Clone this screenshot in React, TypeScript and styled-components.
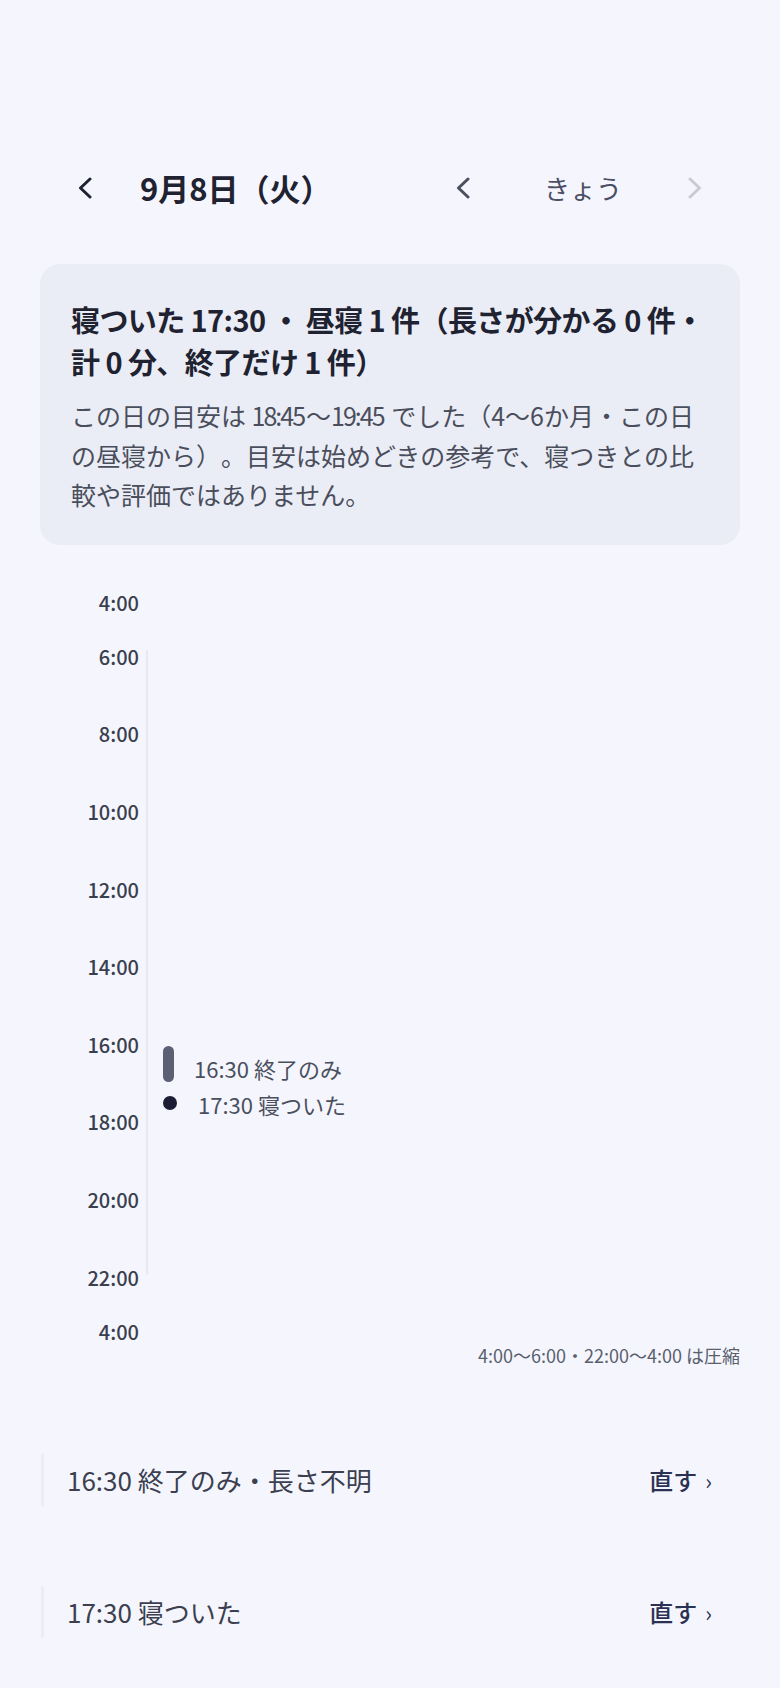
import React from 'react';
import styled, { createGlobalStyle } from 'styled-components';

const GlobalStyle = createGlobalStyle`
    html, body {
        margin: 0;
        padding: 0;
        background: #f5f6fd;
    }
    body {
        font-family: 'Noto Sans CJK JP', 'Noto Sans', sans-serif;
        color: #1f2230;
        text-spacing-trim: space-all;
    }
    * {
        box-sizing: border-box;
    }
`;

// chart scale: y of each axis tick inside the chart box
const TICKS: { label: string; y: number }[] = [
    { label: '4:00', y: 24 },
    { label: '6:00', y: 78 },
    { label: '8:00', y: 155.6 },
    { label: '10:00', y: 233.2 },
    { label: '12:00', y: 310.8 },
    { label: '14:00', y: 388.4 },
    { label: '16:00', y: 466 },
    { label: '18:00', y: 543.6 },
    { label: '20:00', y: 621.2 },
    { label: '22:00', y: 698.8 },
    { label: '4:00', y: 753 },
];

const HOUR = 38.8;
const yAt = (h: number, m: number) => 78 + (h - 6 + m / 60) * HOUR;

const records = [
    { id: 1, text: '16:30 終了のみ・長さ不明' },
    { id: 2, text: '17:30 寝ついた' },
];

function Chevron({ dir }: { dir: 'left' | 'right' }) {
    return (
        <svg width="14" height="22" viewBox="0 0 14 22" fill="none">
            <polyline
                points={dir === 'left' ? '12,2 2.5,11 12,20' : '2,2 11.5,11 2,20'}
                stroke="currentColor"
                strokeWidth="3"
                strokeLinecap="round"
                strokeLinejoin="round"
            />
        </svg>
    );
}

export default function App() {
    const endY = yAt(16, 30);
    const sleepY = yAt(17, 30);

    return (
        <>
            <GlobalStyle />
            <Page>
                <Header>
                    <HeaderGroup>
                        <IconButton $tone="dark">
                            <Chevron dir="left" />
                        </IconButton>
                        <DateTitle>9月8日（火）</DateTitle>
                    </HeaderGroup>
                    <HeaderGroup>
                        <IconButton $tone="mid">
                            <Chevron dir="left" />
                        </IconButton>
                        <TodayLabel>きょう</TodayLabel>
                        <IconButton $tone="off" disabled>
                            <Chevron dir="right" />
                        </IconButton>
                    </HeaderGroup>
                </Header>

                <SummaryCard>
                    <SummaryTitle>
                        寝ついた 17:30 ・ 昼寝 1 件（長さが分かる 0 件・計 0 分、終了だけ 1 件）
                    </SummaryTitle>
                    <SummaryNote>
                        この日の目安は <Num>18:45</Num>〜<Num>19:45</Num> でした（4〜6か月・この日の昼寝から）。目安は始めどきの参考で、寝つきとの比較や評価ではありません。
                    </SummaryNote>
                </SummaryCard>

                <Chart>
                    {TICKS.map((t, i) => (
                        <TickLabel key={i} style={{ top: t.y - 12 }}>
                            {t.label}
                        </TickLabel>
                    ))}
                    <AxisLine />
                    <EndBar style={{ top: endY - 18 }} />
                    <EventText style={{ top: endY + 4 - 16 }} $x={154}>
                        16:30 終了のみ
                    </EventText>
                    <SleepDot style={{ top: sleepY - 7 }} />
                    <EventText style={{ top: sleepY + 1 - 16 }} $x={158}>
                        17:30 寝ついた
                    </EventText>
                </Chart>
                <Footnote>4:00〜6:00・22:00〜4:00 は圧縮</Footnote>

                <RecordList>
                    {records.map((r) => (
                        <RecordRow key={r.id}>
                            <RecordText>{r.text}</RecordText>
                            <EditLink>
                                直す<span>›</span>
                            </EditLink>
                        </RecordRow>
                    ))}
                </RecordList>
            </Page>
        </>
    );
}

const Page = styled.div`
    min-height: 1688px;
    padding: 158px 40px 40px;
    display: flex;
    flex-direction: column;
`;

const Header = styled.header`
    height: 60px;
    margin: 0 23px;
    display: flex;
    align-items: center;
    justify-content: space-between;
`;

const HeaderGroup = styled.div`
    display: flex;
    align-items: center;
`;

const IconButton = styled.button<{ $tone: 'dark' | 'mid' | 'off' }>`
    all: unset;
    width: 44px;
    height: 44px;
    display: flex;
    align-items: center;
    justify-content: center;
    cursor: pointer;
    color: ${({ $tone }) =>
        $tone === 'dark' ? '#1f2230' : $tone === 'mid' ? '#4b4f5e' : '#c9cbd3'};
`;

const DateTitle = styled.h1`
    margin: 0 0 0 33px;
    font-size: 31px;
    font-weight: 700;
    line-height: 40px;
    color: #1f2230;
`;

const TodayLabel = styled.span`
    padding: 0 51px 0 59px;
    font-size: 26px;
    line-height: 40px;
    color: #4a4f66;
`;

const SummaryCard = styled.section`
    margin-top: 46px;
    padding: 34px 29px 30px 31px;
    background: #eaedf5;
    border-radius: 20px;
`;

const SummaryTitle = styled.h2`
    margin: 0;
    font-size: 29px;
    font-weight: 700;
    line-height: 42px;
    letter-spacing: -0.6px;
    color: #1f2230;
`;

// times in the note are set tighter than the kana around them
const Num = styled.span`
    letter-spacing: -0.08em;
    margin-right: 0.08em;
`;

const SummaryNote = styled.p`
    margin: 14px 0 0;
    font-size: 25px;
    line-height: 39.6px;
    color: #4a4e5c;
`;

const Chart = styled.div`
    position: relative;
    margin-top: 34px;
    height: 763px;
`;

const TickLabel = styled.div`
    position: absolute;
    left: 0;
    width: 99px;
    text-align: right;
    font-size: 20px;
    font-weight: 500;
    line-height: 24px;
    color: #3a3f4e;
`;

const AxisLine = styled.div`
    position: absolute;
    left: 106px;
    top: 71px;
    width: 2px;
    height: 625px;
    background: #e8eaf2;
`;

const EndBar = styled.div`
    position: absolute;
    left: 123px;
    width: 11px;
    height: 36px;
    border-radius: 6px;
    background: #5b6074;
`;

const SleepDot = styled.div`
    position: absolute;
    left: 123px;
    width: 14px;
    height: 14px;
    border-radius: 50%;
    background: #1c1d35;
`;

const EventText = styled.div<{ $x: number }>`
    position: absolute;
    left: ${({ $x }) => $x}px;
    font-size: 22px;
    line-height: 32px;
    color: #4a4f5e;
    white-space: nowrap;
`;

const Footnote = styled.div`
    text-align: right;
    font-size: 18px;
    line-height: 26px;
    color: #5a5f6e;
`;

const RecordList = styled.div`
    margin-top: 86px;
    display: flex;
    flex-direction: column;
    gap: 80px;
`;

const RecordRow = styled.div`
    min-height: 52px;
    margin-left: 1px;
    padding: 0 28px 0 23px;
    display: flex;
    align-items: center;
    justify-content: space-between;
    border-left: 3px solid #eceef6;
`;

const RecordText = styled.span`
    font-size: 26px;
    line-height: 36px;
    color: #3b3f4f;
`;

const EditLink = styled.span`
    display: flex;
    align-items: center;
    gap: 8px;
    font-size: 24px;
    font-weight: 500;
    line-height: 36px;
    color: #2b3152;

    span {
        font-size: 22px;
        font-weight: 400;
    }
`;
